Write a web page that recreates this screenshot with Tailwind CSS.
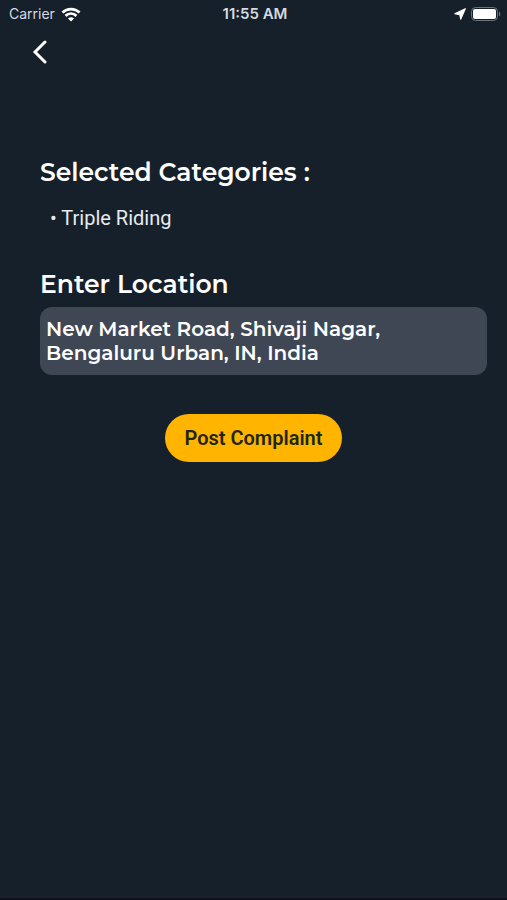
<!DOCTYPE html>
<html lang="en">
<head>
    <meta charset="UTF-8">
    <meta name="viewport" content="width=device-width, initial-scale=1.0">
    <title>Post Complaint</title>
    <script src="https://cdn.jsdelivr.net/npm/@tailwindcss/browser@4"></script>
</head>
<body class="bg-[#15202b] text-white font-['Roboto',sans-serif] min-h-screen flex flex-col border-b-2 border-[#10101f]">
    <!-- Status bar -->
    <div class="grid grid-cols-3 items-center h-7 pl-[9px] pr-[6px] font-['Inter',sans-serif] text-sm text-[#d5dae0]">
        <div class="flex items-center gap-[6px]">
            <span>Carrier</span>
            <svg class="w-5 h-[15px]" viewBox="0 0 18 14" fill="none" stroke="#fff" stroke-width="2.6" aria-hidden="true">
                <path d="M1 5.2C5.6.9 12.4.9 17 5.2"/>
                <path d="M3.9 8.3C6.9 5.5 11.1 5.5 14.1 8.3"/>
                <path d="M9 13.6L6.2 10.7C7.8 9.2 10.2 9.2 11.8 10.7Z" fill="#fff" stroke="none"/>
            </svg>
        </div>
        <span class="text-center text-[15px] font-semibold">11:55 AM</span>
        <div class="flex items-center justify-end gap-[5px]">
            <svg class="w-3 h-3" viewBox="0 0 11 11" fill="#fff" stroke="#fff" stroke-linejoin="round" aria-hidden="true">
                <path d="M10.4.6L6.1 10.3L5.3 6.2L.7 5.3Z"/>
            </svg>
            <svg class="w-[30px] h-[14px]" viewBox="0 0 30 14" aria-hidden="true">
                <rect x=".5" y=".5" width="26" height="13" rx="4" fill="none" stroke="#6b727b"/>
                <rect x="2" y="2" width="23" height="10" rx="2" fill="#fff"/>
                <path d="M28 4.5C29.8 5.3 29.8 8.7 28 9.5Z" fill="#6b727b"/>
            </svg>
        </div>
    </div>

    <!-- Header -->
    <header class="h-12 px-8">
        <button type="button" aria-label="Back" class="block py-3">
            <svg class="w-4 h-6" viewBox="0 0 16 24" fill="none" stroke="#fff" stroke-width="3" stroke-linecap="round" aria-hidden="true">
                <path d="M13 2L3 12L13 22"/>
            </svg>
        </button>
    </header>

    <!-- Complaint form -->
    <form class="pt-20 pl-10 pr-5 flex flex-col">
        <h2 class="font-['Montserrat','Inter',sans-serif] text-[25px] leading-8 font-semibold">Selected Categories :</h2>
        <ul class="pt-4 pl-[10px] text-xl leading-7 text-[#e8ebef]">
            <li>• Triple Riding</li>
        </ul>

        <label for="location" class="pt-9 font-['Montserrat','Inter',sans-serif] text-[25px] leading-8 font-semibold">Enter Location</label>
        <textarea id="location" rows="2" class="mt-[7px] h-17 px-[6px] py-[10px] rounded-xl bg-[#3f4754] resize-none overflow-hidden font-['Montserrat','Inter',sans-serif] text-xl leading-6 font-semibold">New Market Road, Shivaji Nagar,
Bengaluru Urban, IN, India</textarea>

        <button type="button" class="mt-[39px] mr-5 self-center h-12 px-[19px] rounded-full bg-[#ffb400] text-[#1f2614] text-xl font-semibold">Post Complaint</button>
    </form>
</body>
</html>
